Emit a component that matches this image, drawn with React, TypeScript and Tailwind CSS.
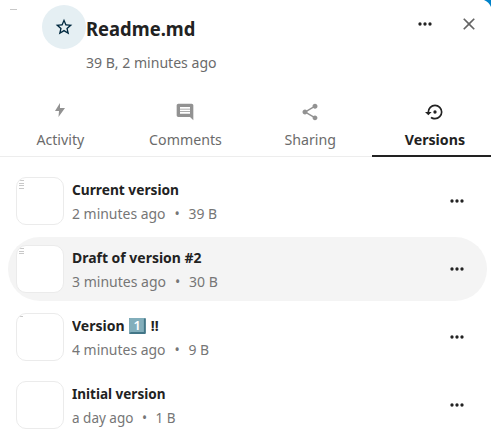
import type { ReactNode } from 'react';

function Icon({ d, className }: { d: string; className: string }) {
  return (
    <svg viewBox="0 0 24 24" fill="currentColor" className={className}>
      <path d={d} />
    </svg>
  );
}

const DOTS =
  'M16 12a2 2 0 1 1 4 0a2 2 0 1 1-4 0M10 12a2 2 0 1 1 4 0a2 2 0 1 1-4 0M4 12a2 2 0 1 1 4 0a2 2 0 1 1-4 0Z';
const CLOSE =
  'M19,6.41L17.59,5L12,10.59L6.41,5L5,6.41L10.59,12L5,17.59L6.41,19L12,13.41L17.59,19L19,17.59L13.41,12L19,6.41Z';
const STAR =
  'M12,15.39L8.24,17.66L9.23,13.38L5.91,10.5L10.29,10.13L12,6.09L13.71,10.13L18.09,10.5L14.77,13.38L15.76,17.66M22,9.24L14.81,8.63L12,2L9.19,8.63L2,9.24L7.45,13.97L5.82,21L12,17.27L18.18,21L16.54,13.97L22,9.24Z';
const RESTORE =
  'M12,3A9,9 0 0,0 3,12H0L4,16L8,12H5A7,7 0 0,1 12,5A7,7 0 0,1 19,12A7,7 0 0,1 12,19C10.5,19 9.09,18.5 7.94,17.7L6.5,19.14C8.04,20.3 9.94,21 12,21A9,9 0 0,0 21,12A9,9 0 0,0 12,3M14,12A2,2 0 0,0 12,10A2,2 0 0,0 10,12A2,2 0 0,0 12,14A2,2 0 0,0 14,12Z';
const COMMENT =
  'M22 4c0-1.1-.9-2-2-2H4c-1.1 0-2 .9-2 2v12c0 1.1.9 2 2 2h14l4 4V4zM18 14H6v-2h12v2zm0-3H6V9h12v2zm0-3H6V6h12v2z';
const SHARE =
  'M18 16.08c-.76 0-1.44.3-1.96.77L8.91 12.7c.05-.23.09-.46.09-.7s-.04-.47-.09-.7l7.05-4.11c.54.5 1.25.81 2.04.81 1.66 0 3-1.34 3-3s-1.34-3-3-3-3 1.34-3 3c0 .24.04.47.09.7L8.04 9.81C7.5 9.31 6.79 9 6 9c-1.66 0-3 1.34-3 3s1.34 3 3 3c.79 0 1.5-.31 2.04-.81l7.12 4.16c-.05.21-.08.43-.08.65 0 1.61 1.31 2.92 2.92 2.92s2.92-1.31 2.92-2.92-1.31-2.92-2.92-2.92z';

function Tab({ label, icon, active }: { label: string; icon: ReactNode; active?: boolean }) {
  return (
    <div
      className={
        active
          ? 'flex flex-1 flex-col items-center border-b-2 border-[#222] font-bold text-[#222]'
          : 'flex flex-1 flex-col items-center border-b border-[#ededed] text-[#6b6b6b]'
      }
    >
      <div className="flex h-[30px] items-center">{icon}</div>
      <div className="mt-[3px] scale-x-[0.945] leading-[22px]">{label}</div>
    </div>
  );
}

function Keycap() {
  return (
    <svg viewBox="0 0 17 16" preserveAspectRatio="none" className="mx-[5px] inline-block h-4 w-[18px] overflow-visible align-[-3px]">
      <rect width="17" height="16" rx="1" fill="#427687" />
      <path d="M0 1Q0 0 1 0H16L15 1.5V14H2L0 15Z" fill="#82aebb" />
      <text x="8.2" y="12.3" textAnchor="middle" fill="#fff" fontSize="13" fontWeight="600" fontFamily="Noto Sans, sans-serif">
        1
      </text>
    </svg>
  );
}

interface Version {
  id: string;
  title: ReactNode;
  titleScale: string;
  age: string;
  size: string;
  metaScale: string;
  lines: number;
  hovered?: boolean;
}

const versions: Version[] = [
  {
    id: 'current',
    title: 'Current version',
    titleScale: 'scale-x-[0.915]',
    age: '2 minutes ago',
    size: '39 B',
    metaScale: 'scale-x-[0.93]',
    lines: 4,
  },
  {
    id: 'draft',
    title: 'Draft of version #2',
    titleScale: 'scale-x-[0.93]',
    age: '3 minutes ago',
    size: '30 B',
    metaScale: 'scale-x-[0.935]',
    lines: 3,
    hovered: true,
  },
  {
    id: 'one',
    title: (
      <>
        Version
        <Keycap />
        !!
      </>
    ),
    titleScale: 'scale-x-[0.935]',
    age: '4 minutes ago',
    size: '9 B',
    metaScale: 'scale-x-[0.93]',
    lines: 1,
  },
  {
    id: 'initial',
    title: 'Initial version',
    titleScale: 'scale-x-[0.9]',
    age: 'a day ago',
    size: '1 B',
    metaScale: 'scale-x-[0.9]',
    lines: 0,
  },
];

function Preview({ lines }: { lines: number }) {
  return (
    <div className="h-12 w-12 shrink-0 overflow-hidden rounded-[10px] border border-[#ebebeb] bg-white pl-[2px] pt-[2px]">
      {Array.from({ length: lines }, (_, i) => (
        <div key={i} className={lines === 1 ? 'mb-[1.5px] h-px w-1 bg-[#c8c8c8]' : 'mb-[1.5px] h-px w-[5px] bg-[#c8c8c8]'} />
      ))}
    </div>
  );
}

function VersionRow({ version }: { version: Version }) {
  return (
    <li
      className={
        version.hovered
          ? 'flex h-16 items-center rounded-[32px] bg-[#f4f4f4] px-2'
          : 'flex h-16 items-center rounded-[32px] px-2'
      }
    >
      <Preview lines={version.lines} />
      <div className="ml-2 flex-1">
        <div className={`h-6 origin-left font-bold leading-6 whitespace-nowrap text-[#222] ${version.titleScale}`}>
          {version.title}
        </div>
        <div className={`flex h-6 origin-left gap-[9.5px] leading-6 text-[#767676] ${version.metaScale}`}>
          <span>{version.age}</span>
          <span>•</span>
          <span>{version.size}</span>
        </div>
      </div>
      <Icon d={DOTS} className="mr-3 h-5 w-5 text-[#222]" />
    </li>
  );
}

export default function App() {
  return (
    <div className="relative h-[447px] w-[491px] overflow-hidden bg-white font-['Noto_Sans',sans-serif] text-[15px] text-[#222]">
      <svg viewBox="0 0 8 8" className="absolute right-0 top-0 h-2 w-2">
        <path d="M1 0H8V7Q6 2 1 0Z" fill="#0082c9" />
      </svg>
      <header className="flex h-[95px]">
        <div className="ml-[10px] mt-[9px] h-px w-[7px] bg-[#c8c8c8]" />
        <div className="ml-[25px] mt-[5px] flex h-11 w-11 items-center justify-center rounded-full bg-[#e5eff3] text-[#00293f]">
          <Icon d={STAR} className="h-5 w-5" />
        </div>
        <div className="flex-1 pt-[14px]">
          <h1 className="h-[30px] origin-left scale-x-[0.92] text-[20px] font-bold leading-[30px]">Readme.md</h1>
          <p className="mt-[7px] origin-left scale-x-[0.938] leading-[22px] text-[#6b6b6b]">39 B, 2 minutes ago</p>
        </div>
        <Icon d={DOTS} className="mt-[14px] h-5 w-5" />
        <Icon d={CLOSE} className="ml-6 mr-3 mt-[14px] h-5 w-5 text-[#646464]" />
      </header>
      <nav className="-ml-[2px] flex h-[62px] w-[499px]">
        <Tab
          label="Activity"
          icon={
            <svg viewBox="0 0 16 16" className="mb-[1px] h-4 w-4 fill-[#929292]">
              <path d="M8 1L3 9h4l-.5 6L13 6H8z" />
            </svg>
          }
        />
        <Tab label="Comments" icon={<Icon d={COMMENT} className="mt-1 h-5 w-5 text-[#929292]" />} />
        <Tab label="Sharing" icon={<Icon d={SHARE} className="mt-1 h-5 w-5 text-[#929292]" />} />
        <Tab label="Versions" active icon={<Icon d={RESTORE} className="ml-px mt-1 h-5 w-5" />} />
      </nav>
      <ul className="ml-2 mt-3 flex w-[479px] flex-col gap-1">
        {versions.map((v) => (
          <VersionRow key={v.id} version={v} />
        ))}
      </ul>
    </div>
  );
}
